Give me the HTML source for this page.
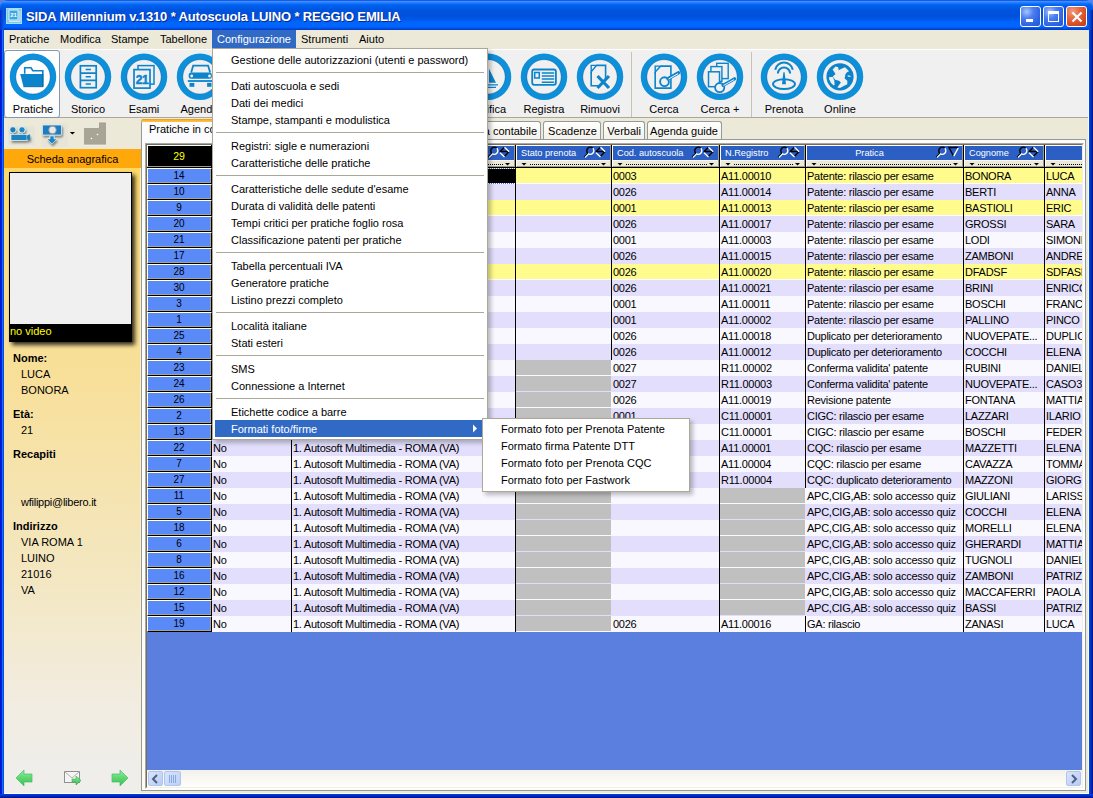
<!DOCTYPE html>
<html><head><meta charset="utf-8">
<style>
*{box-sizing:border-box;margin:0;padding:0}
html,body{width:1093px;height:798px;overflow:hidden;background:#ECE9D8;font-family:"Liberation Sans",sans-serif;font-size:11px;color:#000}
.a{position:absolute}
.t{position:absolute;white-space:pre;line-height:1}
</style></head><body>

<div class="a" style="left:0;top:0;width:1093px;height:10px;background:#5A82E2"></div>
<div class="a" style="left:0;top:0;width:1093px;height:30px;background:linear-gradient(#0A3CD8 0,#3C90FF 1.5px,#1A78FF 3px,#0062F2 5px,#0054DE 10px,#0050DA 15px,#0056E6 19px,#0064FC 22px,#0066FF 27px,#0044D4 29px,#003CC8 30px);border-radius:8px 8px 0 0"></div>
<div class="a" style="left:0;top:10px;width:4px;height:20px;background:linear-gradient(90deg,#0030C8,#0A50E0 3px,#0A5CE8)"></div>
<div class="a" style="left:1088px;top:10px;width:5px;height:20px;background:linear-gradient(90deg,#0A5CE8,#0040C8 3px,#001890)"></div>
<div class="a" style="left:0;top:30px;width:4px;height:768px;background:linear-gradient(90deg,#0018D0 0,#0020D8 1.5px,#1A6AF8 2.5px,#0050E8 3.5px)"></div>
<div class="a" style="left:1088px;top:30px;width:1px;height:764px;background:#FFFDF0"></div>
<div class="a" style="left:1089px;top:30px;width:4px;height:768px;background:linear-gradient(90deg,#0048F0,#0030C0 2px,#00108A)"></div>
<div class="a" style="left:4px;top:793px;width:1085px;height:1px;background:#FFFDF0"></div>
<div class="a" style="left:0;top:794px;width:1093px;height:4px;background:linear-gradient(#0040F0,#0030C8 1.5px,#00108A)"></div>
<svg class="a" style="left:6px;top:8px" width="16" height="16"><rect x="0" y="0" width="16" height="16" fill="#7CCBEA"/><rect x="0.5" y="0.5" width="15" height="15" fill="none" stroke="#A8DDF2"/><rect x="3" y="2" width="9" height="10" fill="#3AA8DC" stroke="#D8F0FA" stroke-width="1"/><text x="7.5" y="8.5" font-size="6" font-weight="bold" fill="#FFFFFF" text-anchor="middle" font-family="Liberation Sans">21</text><path d="M3 13.5 H14 V3" fill="none" stroke="#C8E8F6" stroke-width="1"/></svg>
<div class="t" style="left:26px;top:10px;font-size:13px;font-weight:bold;color:#fff;text-shadow:1px 1px 0 #0A2A8A;letter-spacing:-0.15px">SIDA Millennium v.1310 * Autoscuola LUINO * REGGIO EMILIA</div>
<div class="a" style="left:1020px;top:6px;width:21px;height:21px;border:1px solid #fff;border-radius:3px;background:radial-gradient(circle at 30% 25%,#A8C4FA 0,#4A7EF0 35%,#2F63E2 70%,#2455D0 100%)"><div class="a" style="left:5px;top:12px;width:7px;height:3px;background:#fff"></div></div>
<div class="a" style="left:1043px;top:6px;width:21px;height:21px;border:1px solid #fff;border-radius:3px;background:radial-gradient(circle at 30% 25%,#A8C4FA 0,#4A7EF0 35%,#2F63E2 70%,#2455D0 100%)"><div class="a" style="left:4px;top:4px;width:11px;height:11px;border:1px solid #fff;border-top-width:3px"></div></div>
<div class="a" style="left:1066px;top:6px;width:21px;height:21px;border:1px solid #fff;border-radius:3px;background:radial-gradient(circle at 30% 25%,#F0A080 0,#E56A45 35%,#D84A20 70%,#C23A12 100%)"><svg class="a" style="left:4px;top:4px" width="12" height="12"><path d="M1.5 1.5L10.5 10.5M10.5 1.5L1.5 10.5" stroke="#fff" stroke-width="2.2"/></svg></div>
<div class="a" style="left:4px;top:30px;width:1085px;height:19px;background:#ECE9D8"></div>
<div class="t" style="left:9px;top:34px">Pratiche</div>
<div class="t" style="left:60px;top:34px">Modifica</div>
<div class="t" style="left:111px;top:34px">Stampe</div>
<div class="t" style="left:160px;top:34px">Tabellone</div>
<div class="t" style="left:301px;top:34px">Strumenti</div>
<div class="t" style="left:359px;top:34px">Aiuto</div>
<div class="a" style="left:212px;top:30px;width:84px;height:19px;background:#316AC5"></div>
<div class="t" style="left:217px;top:34px;color:#fff">Configurazione</div>
<div class="a" style="left:4px;top:49px;width:1084px;height:69px;background:#F0F0F0;border-top:1px solid #FFFFFF;border-bottom:1px solid #ACA899"></div>
<div class="a" style="left:4px;top:50px;width:56px;height:68px;background:linear-gradient(#FFFFFF,#FCFCFC);border:1px solid #8098B0;border-radius:3px"></div>
<div class="a" style="left:631px;top:52px;width:1px;height:65px;background:#C8C4B4"></div>
<div class="a" style="left:751px;top:52px;width:1px;height:65px;background:#C8C4B4"></div>
<svg class="a" style="left:8px;top:52px;overflow:visible" width="50" height="50"><g transform="translate(25,24.8)"><circle cx="0" cy="0" r="20.2" fill="none" stroke="#0E8FDA" stroke-width="6.1"/><circle cx="0" cy="0" r="17.2" fill="none" stroke="#0A4F8A" stroke-width="0.6" opacity="0.6"/><path d="M-8.3 -3 V-9.1 H-2 L-0.1 -6.1 H9.8 V9.9" fill="none" stroke="#0C84CC" stroke-width="1.6"/><path d="M-12.8 -2.8 H9.8 V9.9 H-9.5 Z" fill="#0C84CC"/><path d="M-9.5 9.9 H9.8 V-2.8" fill="none" stroke="#0A5E9C" stroke-width="0.8"/></g></svg>
<div class="t" style="left:-7px;width:80px;text-align:center;top:104px">Pratiche</div>
<svg class="a" style="left:63px;top:52px;overflow:visible" width="50" height="50"><g transform="translate(25,24.8)"><circle cx="0" cy="0" r="20.2" fill="none" stroke="#0E8FDA" stroke-width="6.1"/><circle cx="0" cy="0" r="17.2" fill="none" stroke="#0A4F8A" stroke-width="0.6" opacity="0.6"/><rect x="-7.6" y="-11" width="15.8" height="21.9" fill="none" stroke="#0C84CC" stroke-width="1.7"/><path d="M-7.6 -3.7H8.2M-7.6 3.6H8.2" stroke="#0C84CC" stroke-width="1.7"/><path d="M-2.3 -7.3H2.9M-2.3 0H2.9M-2.3 7.3H2.9" stroke="#0C84CC" stroke-width="1.5"/></g></svg>
<div class="t" style="left:48px;width:80px;text-align:center;top:104px">Storico</div>
<svg class="a" style="left:119px;top:52px;overflow:visible" width="50" height="50"><g transform="translate(25,24.8)"><circle cx="0" cy="0" r="20.2" fill="none" stroke="#0E8FDA" stroke-width="6.1"/><circle cx="0" cy="0" r="17.2" fill="none" stroke="#0A4F8A" stroke-width="0.6" opacity="0.6"/><rect x="-6" y="-11.2" width="16" height="18.5" fill="#F0F0F0" stroke="#0C84CC" stroke-width="1.5"/><rect x="-10" y="-7.2" width="16" height="18.5" fill="#F0F0F0" stroke="#0C84CC" stroke-width="1.7"/><text x="-2" y="6.8" font-size="12" font-weight="700" fill="#0C84CC" stroke="#0C84CC" stroke-width="0.5" text-anchor="middle" font-family="Liberation Sans" letter-spacing="-0.5">21</text></g></svg>
<div class="t" style="left:104px;width:80px;text-align:center;top:104px">Esami</div>
<svg class="a" style="left:174.5px;top:52px;overflow:visible" width="50" height="50"><g transform="translate(25,24.8)"><circle cx="0" cy="0" r="20.2" fill="none" stroke="#0E8FDA" stroke-width="6.1"/><circle cx="0" cy="0" r="17.2" fill="none" stroke="#0A4F8A" stroke-width="0.6" opacity="0.6"/><path d="M-8.8 -4.3 L-6.8 -11.2 L8.1 -11.2 L10.1 -4.3" fill="none" stroke="#0C84CC" stroke-width="1.8"/><rect x="-11.3" y="-4.2" width="23.1" height="6.1" rx="2.5" fill="#0C84CC"/><circle cx="-8.3" cy="-0.8" r="1.4" fill="#F0F0F0"/><circle cx="9.5" cy="-0.8" r="1.4" fill="#F0F0F0"/><rect x="-12.2" y="3.3" width="24.4" height="1.8" fill="#0C84CC"/><rect x="-10.5" y="6.1" width="4.8" height="3.9" fill="#0C84CC"/><rect x="7.1" y="6.1" width="4.4" height="3.9" fill="#0C84CC"/></g></svg>
<div class="t" style="left:159.5px;width:80px;text-align:center;top:104px">Agenda</div>
<svg class="a" style="left:230px;top:52px;overflow:visible" width="50" height="50"><g transform="translate(25,24.8)"><circle cx="0" cy="0" r="20.2" fill="none" stroke="#0E8FDA" stroke-width="6.1"/><circle cx="0" cy="0" r="17.2" fill="none" stroke="#0A4F8A" stroke-width="0.6" opacity="0.6"/></g></svg>
<svg class="a" style="left:286px;top:52px;overflow:visible" width="50" height="50"><g transform="translate(25,24.8)"><circle cx="0" cy="0" r="20.2" fill="none" stroke="#0E8FDA" stroke-width="6.1"/><circle cx="0" cy="0" r="17.2" fill="none" stroke="#0A4F8A" stroke-width="0.6" opacity="0.6"/></g></svg>
<svg class="a" style="left:342px;top:52px;overflow:visible" width="50" height="50"><g transform="translate(25,24.8)"><circle cx="0" cy="0" r="20.2" fill="none" stroke="#0E8FDA" stroke-width="6.1"/><circle cx="0" cy="0" r="17.2" fill="none" stroke="#0A4F8A" stroke-width="0.6" opacity="0.6"/></g></svg>
<svg class="a" style="left:406px;top:52px;overflow:visible" width="50" height="50"><g transform="translate(25,24.8)"><circle cx="0" cy="0" r="20.2" fill="none" stroke="#0E8FDA" stroke-width="6.1"/><circle cx="0" cy="0" r="17.2" fill="none" stroke="#0A4F8A" stroke-width="0.6" opacity="0.6"/></g></svg>
<svg class="a" style="left:463px;top:52px;overflow:visible" width="50" height="50"><g transform="translate(25,24.8)"><circle cx="0" cy="0" r="20.2" fill="none" stroke="#0E8FDA" stroke-width="6.1"/><circle cx="0" cy="0" r="17.2" fill="none" stroke="#0A4F8A" stroke-width="0.6" opacity="0.6"/><path d="M-1 -10 L-10 6 L-1 6 Z" fill="#0C84CC"/><path d="M1 -8 L8 6 L1 6Z" fill="#0C84CC"/><path d="M-11 8 H10 M-9 10.5 H8" stroke="#0C84CC" stroke-width="1.2"/></g></svg>
<div class="t" style="left:448px;width:80px;text-align:center;top:104px">Verifica</div>
<svg class="a" style="left:519px;top:52px;overflow:visible" width="50" height="50"><g transform="translate(25,24.8)"><circle cx="0" cy="0" r="20.2" fill="none" stroke="#0E8FDA" stroke-width="6.1"/><circle cx="0" cy="0" r="17.2" fill="none" stroke="#0A4F8A" stroke-width="0.6" opacity="0.6"/><rect x="-11.8" y="-7.3" width="23.7" height="15.3" rx="2" fill="none" stroke="#0C84CC" stroke-width="1.8"/><rect x="-9.3" y="-4.3" width="4.6" height="5.5" fill="none" stroke="#0C84CC" stroke-width="1.5"/><path d="M-2.2 -3.9H10.2M-2.2 -0.9H10.2M-2.2 2.3H10.2M-2.2 5.5H10.2" stroke="#0C84CC" stroke-width="1.5"/></g></svg>
<div class="t" style="left:504px;width:80px;text-align:center;top:104px">Registra</div>
<svg class="a" style="left:575px;top:52px;overflow:visible" width="50" height="50"><g transform="translate(25,24.8)"><circle cx="0" cy="0" r="20.2" fill="none" stroke="#0E8FDA" stroke-width="6.1"/><circle cx="0" cy="0" r="17.2" fill="none" stroke="#0A4F8A" stroke-width="0.6" opacity="0.6"/><path d="M-3.5 -11.4 H5.6 V2 M-8.8 -5 V8.9 H-1" fill="none" stroke="#0C84CC" stroke-width="1.6"/><path d="M-8.8 -11.4 H-3.5 L-8.8 -5 Z" fill="none" stroke="#0C84CC" stroke-width="1.4"/><path d="M-2.5 -0.8 L9 11.2 M9 -0.8 L-2.5 11.2" stroke="#0C84CC" stroke-width="3.2"/></g></svg>
<div class="t" style="left:560px;width:80px;text-align:center;top:104px">Rimuovi</div>
<svg class="a" style="left:639px;top:52px;overflow:visible" width="50" height="50"><g transform="translate(25,24.8)"><circle cx="0" cy="0" r="20.2" fill="none" stroke="#0E8FDA" stroke-width="6.1"/><circle cx="0" cy="0" r="17.2" fill="none" stroke="#0A4F8A" stroke-width="0.6" opacity="0.6"/><path d="M-3.3 -10.7 H6.9 V11.3 H-8.8 V-4.8" fill="none" stroke="#0C84CC" stroke-width="1.6"/><path d="M-8.8 -10.7 H-3.3 L-8.8 -4.8 Z" fill="none" stroke="#0C84CC" stroke-width="1.4"/><circle cx="0.5" cy="4.9" r="4.4" fill="#F0F0F0" stroke="#0C84CC" stroke-width="1.9"/><path d="M4 2 L14.5 -4" stroke="#0C84CC" stroke-width="3.4" stroke-linecap="round"/><path d="M4.5 2.3 L14 -3.2" stroke="#FFF" stroke-width="1"/></g></svg>
<div class="t" style="left:624px;width:80px;text-align:center;top:104px">Cerca</div>
<svg class="a" style="left:695px;top:52px;overflow:visible" width="50" height="50"><g transform="translate(25,24.8)"><circle cx="0" cy="0" r="20.2" fill="none" stroke="#0E8FDA" stroke-width="6.1"/><circle cx="0" cy="0" r="17.2" fill="none" stroke="#0A4F8A" stroke-width="0.6" opacity="0.6"/><rect x="-3.3" y="-13.5" width="11.5" height="15.3" fill="#F0F0F0" stroke="#0C84CC" stroke-width="1.4"/><rect x="-9.1" y="-10.2" width="11" height="14.8" fill="#F0F0F0" stroke="#0C84CC" stroke-width="1.4"/><rect x="-11.5" y="-5" width="11" height="14.9" fill="#F0F0F0" stroke="#0C84CC" stroke-width="1.5"/><circle cx="-0.3" cy="10.8" r="4.6" fill="#F0F0F0" stroke="#0C84CC" stroke-width="1.8"/><path d="M3 8.5 L14.5 2" stroke="#0C84CC" stroke-width="3.2" stroke-linecap="round"/><path d="M3.5 8.7 L14 2.8" stroke="#FFF" stroke-width="0.9"/></g></svg>
<div class="t" style="left:680px;width:80px;text-align:center;top:104px">Cerca +</div>
<svg class="a" style="left:759px;top:52px;overflow:visible" width="50" height="50"><g transform="translate(25,24.8)"><circle cx="0" cy="0" r="20.2" fill="none" stroke="#0E8FDA" stroke-width="6.1"/><circle cx="0" cy="0" r="17.2" fill="none" stroke="#0A4F8A" stroke-width="0.6" opacity="0.6"/><ellipse cx="0" cy="7.3" rx="11" ry="4.9" fill="none" stroke="#0C84CC" stroke-width="1.9"/><path d="M-2 7.5 L-0.6 -4.5 L0.6 -4.5 L2 7.5 Z" fill="#0C84CC"/><path d="M-8.8 -7.1 A9 9 0 0 1 8.8 -7.1" fill="none" stroke="#0C84CC" stroke-width="2"/><path d="M-6.1 -3.3 A6.1 6.1 0 0 1 6.1 -3.3" fill="none" stroke="#0C84CC" stroke-width="2"/></g></svg>
<div class="t" style="left:744px;width:80px;text-align:center;top:104px">Prenota</div>
<svg class="a" style="left:815px;top:52px;overflow:visible" width="50" height="50"><g transform="translate(25,24.8)"><circle cx="0" cy="0" r="20.2" fill="none" stroke="#0E8FDA" stroke-width="6.1"/><circle cx="0" cy="0" r="17.2" fill="none" stroke="#0A4F8A" stroke-width="0.6" opacity="0.6"/><circle cx="0" cy="0" r="13.6" fill="#0C84CC"/><polygon points="-7.4,-7.4 -4.5,-10.4 -1.8,-9.5 -1.3,-6.5 1.4,-8.1 5.0,-9.5 7.3,-7.4 9.1,-5.6 7.3,-4.7 5.5,-2.9 4.6,1.6 7.3,3.9 7.3,7.5 3.7,9.3 0.0,11.1 -2.7,10.6 0.9,5.7 -0.9,3.9 -4.9,2.9 -7.2,-0.2 -4.5,-2.9" fill="#F0F0F0"/><polygon points="-10.8,0.2 -7.2,0.2 -5.8,3.4 -5.4,7.5 -6.3,8.8 -9.0,6.1 -10.8,2.5" fill="#F0F0F0"/><polygon points="7.7,-1.6 10.9,-0.7 10.0,0.2 7.7,-0.2" fill="#F0F0F0"/></g></svg>
<div class="t" style="left:800px;width:80px;text-align:center;top:104px">Online</div>
<div class="a" style="left:4px;top:118px;width:137px;height:31px;background:#ECE9D8"></div>
<div class="a" style="left:4px;top:149px;width:137px;height:19px;background:#FFA80C"></div>
<div class="t" style="left:4px;width:137px;text-align:center;top:154px">Scheda anagrafica</div>
<div class="a" style="left:4px;top:168px;width:137px;height:625px;background:linear-gradient(#FDD868 0,#FADC84 60px,#F8E09C 220px,#F3E8C6 430px,#F2ECE0 530px,#EFEEEA 600px,#EFEEEA 626px);border-right:1px solid #FCEEC8"></div>
<div class="a" style="left:12px;top:175px;width:123px;height:170px;background:#000;filter:blur(2px);opacity:.8"></div>
<div class="a" style="left:9px;top:172px;width:123px;height:170px;background:#000"></div>
<div class="a" style="left:10px;top:173px;width:121px;height:151px;background:#F0F0F0"></div>
<div class="t" style="left:10px;top:326px;color:#FFFF00">no video</div>
<div class="t" style="left:13px;top:353px;font-weight:bold;">Nome:</div>
<div class="t" style="left:21px;top:369px;font-weight:normal;">LUCA</div>
<div class="t" style="left:21px;top:385px;font-weight:normal;">BONORA</div>
<div class="t" style="left:13px;top:409px;font-weight:bold;">Età:</div>
<div class="t" style="left:21px;top:425px;font-weight:normal;">21</div>
<div class="t" style="left:13px;top:449px;font-weight:bold;">Recapiti</div>
<div class="t" style="left:21px;top:497px;font-weight:normal;letter-spacing:-0.25px;">wfilippi@libero.it</div>
<div class="t" style="left:13px;top:521px;font-weight:bold;">Indirizzo</div>
<div class="t" style="left:21px;top:537px;font-weight:normal;">VIA ROMA 1</div>
<div class="t" style="left:21px;top:553px;font-weight:normal;">LUINO</div>
<div class="t" style="left:21px;top:569px;font-weight:normal;">21016</div>
<div class="t" style="left:21px;top:585px;font-weight:normal;">VA</div>
<svg class="a" style="left:4px;top:119px" width="110" height="30"><defs><filter id="sh" x="-30%" y="-30%" width="160%" height="160%"><feGaussianBlur in="SourceAlpha" stdDeviation="1"/><feOffset dx="1" dy="1.5"/><feComponentTransfer><feFuncA type="linear" slope="0.45"/></feComponentTransfer><feMerge><feMergeNode/><feMergeNode in="SourceGraphic"/></feMerge></filter></defs><rect x="4" y="7" width="27" height="19" fill="#E4E2D8" opacity="0.8"/><g filter="url(#sh)"><circle cx="8.9" cy="10.8" r="3.1" fill="#1E7FB8" stroke="#fff" stroke-width="0.7"/><circle cx="18" cy="10.8" r="3.1" fill="#168BC8" stroke="#fff" stroke-width="0.7"/><rect x="7" y="15.3" width="16" height="6" fill="#1A84C0" stroke="#fff" stroke-width="0.6"/><path d="M23 16.5 L26 15.2 L26 21.5 L23 20.3Z" fill="#1A84C0"/></g><rect x="38" y="4" width="26" height="24" fill="#E4E2D8" opacity="0.7"/><g filter="url(#sh)"><rect x="38.5" y="6" width="19" height="10" rx="1" fill="#1A7EC0" stroke="#D8ECF8" stroke-width="0.8"/><circle cx="48.5" cy="11" r="3.8" fill="#E8E8E8" stroke="#909090" stroke-width="0.8"/><path d="M46 17 L50 17 L50 20 L53 20 L48 25 L43 20 L46 20Z" fill="#1A84C8" stroke="#fff" stroke-width="0.5"/></g><path d="M65.8 13 L71 13 L68.4 15.6Z" fill="#000"/><path d="M79.5 8.5 L94.5 8.5 L94.5 3 L102.5 3 L102.5 25 Q102.5 26 101.5 26 L80.5 26 Q79.5 26 79.5 25Z" fill="#A9A596" stroke="#FFFFFF" stroke-width="0.6"/><circle cx="87.5" cy="19.5" r="0.8" fill="#fff"/><circle cx="93.5" cy="15.5" r="0.8" fill="#fff"/></svg>
<svg class="a" style="left:14px;top:769px" width="120" height="20"><defs><linearGradient id="gg" x1="0" y1="0" x2="0" y2="1"><stop offset="0" stop-color="#9BE8A8"/><stop offset="0.5" stop-color="#5CD672"/><stop offset="1" stop-color="#3CC058"/></linearGradient></defs><path d="M2 9 L10 1 L10 5 L18 5 L18 13 L10 13 L10 17Z" fill="url(#gg)" stroke="#48C060" stroke-width="0.7"/><rect x="50.5" y="2.5" width="15" height="11" fill="#F4F4F4" stroke="#909090"/><path d="M50.5 2.5 L58 9 L65.5 2.5" fill="none" stroke="#B0B0B0"/><path d="M58 10 L62 10 L62 7 L67 11.5 L62 16 L62 13 L58 13Z" fill="url(#gg)" stroke="#40A850" stroke-width="0.6"/><path d="M114 9 L106 1 L106 5 L98 5 L98 13 L106 13 L106 17Z" fill="url(#gg)" stroke="#48C060" stroke-width="0.7"/></svg>
<div class="a" style="left:141px;top:139px;width:945px;height:652px;background:#FCFCFE;border:1px solid #919B9C;border-top:none"></div>
<div class="a" style="left:141px;top:119px;width:100px;height:21px;background:#FCFCFE;border:1px solid #919B9C;border-bottom:none;border-radius:3px 3px 0 0"><div class="a" style="left:-1px;top:-1px;right:-1px;height:3px;background:linear-gradient(#E68B2C,#F8B030 1px,#FFC73C);border-radius:3px 3px 0 0"></div></div>
<div class="t" style="left:149px;top:124px">Pratiche in corso</div>
<div class="a" style="left:420px;top:121px;width:121px;height:18px;background:linear-gradient(#FFFFFF,#F3F1E8);border:1px solid #919B9C;border-bottom:none;border-radius:3px 3px 0 0"></div>
<div class="t" style="left:420px;width:117px;text-align:right;top:126px">Prima nota contabile</div>
<div class="a" style="left:543px;top:121px;width:58px;height:18px;background:linear-gradient(#FFFFFF,#F3F1E8);border:1px solid #919B9C;border-bottom:none;border-radius:3px 3px 0 0"></div>
<div class="t" style="left:543px;width:54px;text-align:right;top:126px">Scadenze</div>
<div class="a" style="left:603px;top:121px;width:42px;height:18px;background:linear-gradient(#FFFFFF,#F3F1E8);border:1px solid #919B9C;border-bottom:none;border-radius:3px 3px 0 0"></div>
<div class="t" style="left:603px;width:38px;text-align:right;top:126px">Verbali</div>
<div class="a" style="left:647px;top:121px;width:75px;height:18px;background:linear-gradient(#FFFFFF,#F3F1E8);border:1px solid #919B9C;border-bottom:none;border-radius:3px 3px 0 0"></div>
<div class="t" style="left:647px;width:71px;text-align:right;top:126px">Agenda guide</div>
<div class="a" style="left:212px;top:139px;width:874px;height:1px;background:#919B9C"></div>
<div class="a" style="left:145px;top:143px;width:939px;height:646px;background:#5B7FDE;border-style:solid;border-width:2px;border-color:#ACA899 #FFFFFF #FFFFFF #ACA899"></div>
<div class="a" style="left:146px;top:144px;width:937px;height:644px;border-style:solid;border-width:1px;border-color:#716F64 #F1EFE2 #F1EFE2 #716F64"></div>
<div class="a" style="left:147px;top:145px;width:935px;height:23px;background:#000"></div>
<div class="a" style="left:147px;top:145px;width:64px;height:22px;background:#000;border-top:1px solid #FFF;border-left:1px solid #FFF;border-bottom:1px solid #A09C8C"></div>
<div class="t" style="left:147px;width:64px;text-align:center;top:151px;font-size:10.5px;color:#FFFF00">29</div>
<div class="a" style="left:212px;top:145px;width:79px;height:22px;background:#ECE9D8;border-top:1px solid #FFF;border-left:1px solid #FFF;border-right:1px solid #A09C8C;border-bottom:1px solid #A09C8C"></div>
<div class="a" style="left:213px;top:146px;width:77px;height:14px;background:#2C5FC3"></div>
<div class="a" style="left:213px;top:160px;width:77px;height:1px;background:#F8F6EC"></div>
<svg class="a" style="left:212px;top:161px" width="79" height="6"><path d="M5.5 2 L10.5 2 L8 4.6Z" fill="#000"/><path d="M69 2 L74 2 L71.5 4.6Z" fill="#000"/><path d="M14 3.5 L67 3.5" stroke="#000" stroke-width="1" stroke-dasharray="1 1"/></svg>
<svg class="a" style="left:260px;top:146px" width="28" height="13"><path d="M7.8 7.3 A3.5 3.5 0 0 1 12.8 2.3" fill="none" stroke="#000" stroke-width="1.4"/><path d="M12.8 2.3 A3.5 3.5 0 0 1 7.8 7.3" fill="none" stroke="#fff" stroke-width="1.4"/><path d="M8 7.2 L4.2 11" stroke="#000" stroke-width="1.3"/><path d="M8.5 8 L5 11.5" stroke="#fff" stroke-width="1.1"/><path d="M15.8 5.8 L20.5 1.2 M15.8 5.5 H25 M20.5 10.2 L25.2 5.5" fill="none" stroke="#000" stroke-width="1.3"/><path d="M20.5 1.2 L25.2 5.8 M16 6.8 L20.5 11" fill="none" stroke="#fff" stroke-width="1.3"/></svg>
<div class="a" style="left:292px;top:145px;width:223px;height:22px;background:#ECE9D8;border-top:1px solid #FFF;border-left:1px solid #FFF;border-right:1px solid #A09C8C;border-bottom:1px solid #A09C8C"></div>
<div class="a" style="left:293px;top:146px;width:221px;height:14px;background:#2C5FC3"></div>
<div class="a" style="left:293px;top:160px;width:221px;height:1px;background:#F8F6EC"></div>
<svg class="a" style="left:292px;top:161px" width="223" height="6"><path d="M5.5 2 L10.5 2 L8 4.6Z" fill="#000"/><path d="M213 2 L218 2 L215.5 4.6Z" fill="#000"/><path d="M14 3.5 L211 3.5" stroke="#000" stroke-width="1" stroke-dasharray="1 1"/></svg>
<svg class="a" style="left:484px;top:146px" width="28" height="13"><path d="M7.8 7.3 A3.5 3.5 0 0 1 12.8 2.3" fill="none" stroke="#000" stroke-width="1.4"/><path d="M12.8 2.3 A3.5 3.5 0 0 1 7.8 7.3" fill="none" stroke="#fff" stroke-width="1.4"/><path d="M8 7.2 L4.2 11" stroke="#000" stroke-width="1.3"/><path d="M8.5 8 L5 11.5" stroke="#fff" stroke-width="1.1"/><path d="M15.8 5.8 L20.5 1.2 M15.8 5.5 H25 M20.5 10.2 L25.2 5.5" fill="none" stroke="#000" stroke-width="1.3"/><path d="M20.5 1.2 L25.2 5.8 M16 6.8 L20.5 11" fill="none" stroke="#fff" stroke-width="1.3"/></svg>
<div class="a" style="left:516px;top:145px;width:95px;height:22px;background:#ECE9D8;border-top:1px solid #FFF;border-left:1px solid #FFF;border-right:1px solid #A09C8C;border-bottom:1px solid #A09C8C"></div>
<div class="a" style="left:517px;top:146px;width:93px;height:14px;background:#2C5FC3"></div>
<div class="a" style="left:517px;top:160px;width:93px;height:1px;background:#F8F6EC"></div>
<svg class="a" style="left:516px;top:161px" width="95" height="6"><path d="M5.5 2 L10.5 2 L8 4.6Z" fill="#000"/><path d="M85 2 L90 2 L87.5 4.6Z" fill="#000"/><path d="M14 3.5 L83 3.5" stroke="#000" stroke-width="1" stroke-dasharray="1 1"/></svg>
<div class="t" style="left:521px;top:149px;font-size:9.2px;color:#fff">Stato prenota</div>
<svg class="a" style="left:580px;top:146px" width="28" height="13"><path d="M7.8 7.3 A3.5 3.5 0 0 1 12.8 2.3" fill="none" stroke="#000" stroke-width="1.4"/><path d="M12.8 2.3 A3.5 3.5 0 0 1 7.8 7.3" fill="none" stroke="#fff" stroke-width="1.4"/><path d="M8 7.2 L4.2 11" stroke="#000" stroke-width="1.3"/><path d="M8.5 8 L5 11.5" stroke="#fff" stroke-width="1.1"/><path d="M15.8 5.8 L20.5 1.2 M15.8 5.5 H25 M20.5 10.2 L25.2 5.5" fill="none" stroke="#000" stroke-width="1.3"/><path d="M20.5 1.2 L25.2 5.8 M16 6.8 L20.5 11" fill="none" stroke="#fff" stroke-width="1.3"/></svg>
<div class="a" style="left:612px;top:145px;width:107px;height:22px;background:#ECE9D8;border-top:1px solid #FFF;border-left:1px solid #FFF;border-right:1px solid #A09C8C;border-bottom:1px solid #A09C8C"></div>
<div class="a" style="left:613px;top:146px;width:105px;height:14px;background:#2C5FC3"></div>
<div class="a" style="left:613px;top:160px;width:105px;height:1px;background:#F8F6EC"></div>
<svg class="a" style="left:612px;top:161px" width="107" height="6"><path d="M5.5 2 L10.5 2 L8 4.6Z" fill="#000"/><path d="M97 2 L102 2 L99.5 4.6Z" fill="#000"/><path d="M14 3.5 L95 3.5" stroke="#000" stroke-width="1" stroke-dasharray="1 1"/></svg>
<div class="t" style="left:617px;top:149px;font-size:9.2px;color:#fff">Cod. autoscuola</div>
<svg class="a" style="left:688px;top:146px" width="28" height="13"><path d="M7.8 7.3 A3.5 3.5 0 0 1 12.8 2.3" fill="none" stroke="#000" stroke-width="1.4"/><path d="M12.8 2.3 A3.5 3.5 0 0 1 7.8 7.3" fill="none" stroke="#fff" stroke-width="1.4"/><path d="M8 7.2 L4.2 11" stroke="#000" stroke-width="1.3"/><path d="M8.5 8 L5 11.5" stroke="#fff" stroke-width="1.1"/><path d="M15.8 5.8 L20.5 1.2 M15.8 5.5 H25 M20.5 10.2 L25.2 5.5" fill="none" stroke="#000" stroke-width="1.3"/><path d="M20.5 1.2 L25.2 5.8 M16 6.8 L20.5 11" fill="none" stroke="#fff" stroke-width="1.3"/></svg>
<div class="a" style="left:720px;top:145px;width:85px;height:22px;background:#ECE9D8;border-top:1px solid #FFF;border-left:1px solid #FFF;border-right:1px solid #A09C8C;border-bottom:1px solid #A09C8C"></div>
<div class="a" style="left:721px;top:146px;width:83px;height:14px;background:#2C5FC3"></div>
<div class="a" style="left:721px;top:160px;width:83px;height:1px;background:#F8F6EC"></div>
<svg class="a" style="left:720px;top:161px" width="85" height="6"><path d="M5.5 2 L10.5 2 L8 4.6Z" fill="#000"/><path d="M75 2 L80 2 L77.5 4.6Z" fill="#000"/><path d="M14 3.5 L73 3.5" stroke="#000" stroke-width="1" stroke-dasharray="1 1"/></svg>
<div class="t" style="left:725px;top:149px;font-size:9.2px;color:#fff">N.Registro</div>
<svg class="a" style="left:774px;top:146px" width="28" height="13"><path d="M7.8 7.3 A3.5 3.5 0 0 1 12.8 2.3" fill="none" stroke="#000" stroke-width="1.4"/><path d="M12.8 2.3 A3.5 3.5 0 0 1 7.8 7.3" fill="none" stroke="#fff" stroke-width="1.4"/><path d="M8 7.2 L4.2 11" stroke="#000" stroke-width="1.3"/><path d="M8.5 8 L5 11.5" stroke="#fff" stroke-width="1.1"/><path d="M15.8 5.8 L20.5 1.2 M15.8 5.5 H25 M20.5 10.2 L25.2 5.5" fill="none" stroke="#000" stroke-width="1.3"/><path d="M20.5 1.2 L25.2 5.8 M16 6.8 L20.5 11" fill="none" stroke="#fff" stroke-width="1.3"/></svg>
<div class="a" style="left:806px;top:145px;width:157px;height:22px;background:#ECE9D8;border-top:1px solid #FFF;border-left:1px solid #FFF;border-right:1px solid #A09C8C;border-bottom:1px solid #A09C8C"></div>
<div class="a" style="left:807px;top:146px;width:155px;height:14px;background:#2C5FC3"></div>
<div class="a" style="left:807px;top:160px;width:155px;height:1px;background:#F8F6EC"></div>
<svg class="a" style="left:806px;top:161px" width="157" height="6"><path d="M5.5 2 L10.5 2 L8 4.6Z" fill="#000"/><path d="M147 2 L152 2 L149.5 4.6Z" fill="#000"/><path d="M14 3.5 L145 3.5" stroke="#000" stroke-width="1" stroke-dasharray="1 1"/></svg>
<div class="t" style="left:806px;width:127px;text-align:center;top:149px;font-size:9.2px;color:#fff">Pratica</div>
<svg class="a" style="left:932px;top:146px" width="28" height="13"><path d="M7.8 7.3 A3.5 3.5 0 0 1 12.8 2.3" fill="none" stroke="#000" stroke-width="1.4"/><path d="M12.8 2.3 A3.5 3.5 0 0 1 7.8 7.3" fill="none" stroke="#fff" stroke-width="1.4"/><path d="M8 7.2 L4.2 11" stroke="#000" stroke-width="1.3"/><path d="M8.5 8 L5 11.5" stroke="#fff" stroke-width="1.1"/><path d="M26 1.5 L17 1.5 L21.5 10" fill="none" stroke="#000" stroke-width="1.4"/><path d="M26.2 2 L21.8 10.2" fill="none" stroke="#fff" stroke-width="1.4"/></svg>
<div class="a" style="left:964px;top:145px;width:80px;height:22px;background:#ECE9D8;border-top:1px solid #FFF;border-left:1px solid #FFF;border-right:1px solid #A09C8C;border-bottom:1px solid #A09C8C"></div>
<div class="a" style="left:965px;top:146px;width:78px;height:14px;background:#2C5FC3"></div>
<div class="a" style="left:965px;top:160px;width:78px;height:1px;background:#F8F6EC"></div>
<svg class="a" style="left:964px;top:161px" width="80" height="6"><path d="M5.5 2 L10.5 2 L8 4.6Z" fill="#000"/><path d="M70 2 L75 2 L72.5 4.6Z" fill="#000"/><path d="M14 3.5 L68 3.5" stroke="#000" stroke-width="1" stroke-dasharray="1 1"/></svg>
<div class="t" style="left:969px;top:149px;font-size:9.2px;color:#fff">Cognome</div>
<svg class="a" style="left:1013px;top:146px" width="28" height="13"><path d="M7.8 7.3 A3.5 3.5 0 0 1 12.8 2.3" fill="none" stroke="#000" stroke-width="1.4"/><path d="M12.8 2.3 A3.5 3.5 0 0 1 7.8 7.3" fill="none" stroke="#fff" stroke-width="1.4"/><path d="M8 7.2 L4.2 11" stroke="#000" stroke-width="1.3"/><path d="M8.5 8 L5 11.5" stroke="#fff" stroke-width="1.1"/><path d="M15.8 5.8 L20.5 1.2 M15.8 5.5 H25 M20.5 10.2 L25.2 5.5" fill="none" stroke="#000" stroke-width="1.3"/><path d="M20.5 1.2 L25.2 5.8 M16 6.8 L20.5 11" fill="none" stroke="#fff" stroke-width="1.3"/></svg>
<div class="a" style="left:1045px;top:145px;width:37px;height:22px;background:#ECE9D8;border-top:1px solid #FFF;border-left:1px solid #FFF;border-right:none;border-bottom:1px solid #A09C8C"></div>
<div class="a" style="left:1046px;top:146px;width:36px;height:14px;background:#2C5FC3"></div>
<div class="a" style="left:1046px;top:160px;width:36px;height:1px;background:#F8F6EC"></div>
<svg class="a" style="left:1045px;top:161px" width="37" height="6"><path d="M5.5 2 L10.5 2 L8 4.6Z" fill="#000"/><path d="M14 3.5 L37 3.5" stroke="#000" stroke-width="1" stroke-dasharray="1 1"/></svg>
<div class="a" style="left:211px;top:168px;width:871px;height:16px;background:#F9F8FF"></div>
<div class="a" style="left:211px;top:168px;width:871px;height:15px;background:#FFFB8C"></div>
<div class="a" style="left:211px;top:183px;width:871px;height:1px;background:#FFFFFF"></div>
<div class="a" style="left:147px;top:168px;width:65px;height:16px;background:#5A8AF8;border-top:1px solid #FFF;border-left:1px solid #FFF;border-bottom:1px solid #000;border-right:1px solid #000;box-shadow:inset -1px -1px 0 #A8A494"></div>
<div class="t" style="left:147px;width:64px;text-align:center;top:171px;font-size:10px">14</div>
<div class="a" style="left:612px;top:168px;width:107px;height:16px;overflow:hidden"><div class="t" style="left:1px;top:3px;letter-spacing:-0.25px">0003</div></div>
<div class="a" style="left:720px;top:168px;width:85px;height:16px;overflow:hidden"><div class="t" style="left:1px;top:3px;letter-spacing:-0.25px">A11.00010</div></div>
<div class="a" style="left:806px;top:168px;width:157px;height:16px;overflow:hidden"><div class="t" style="left:1px;top:3px;letter-spacing:-0.25px">Patente: rilascio per esame</div></div>
<div class="a" style="left:964px;top:168px;width:80px;height:16px;overflow:hidden"><div class="t" style="left:1px;top:3px;letter-spacing:-0.25px">BONORA</div></div>
<div class="a" style="left:1045px;top:168px;width:37px;height:16px;overflow:hidden"><div class="t" style="left:1px;top:3px;letter-spacing:-0.25px">LUCA</div></div>
<div class="a" style="left:292px;top:169px;width:223px;height:14px;background:#000;outline:1px dotted #4070F0;outline-offset:0px"></div>
<div class="a" style="left:211px;top:184px;width:871px;height:16px;background:#E2DEFC"></div>
<div class="a" style="left:147px;top:184px;width:65px;height:16px;background:#5A8AF8;border-top:1px solid #FFF;border-left:1px solid #FFF;border-bottom:1px solid #000;border-right:1px solid #000;box-shadow:inset -1px -1px 0 #A8A494"></div>
<div class="t" style="left:147px;width:64px;text-align:center;top:187px;font-size:10px">10</div>
<div class="a" style="left:612px;top:184px;width:107px;height:16px;overflow:hidden"><div class="t" style="left:1px;top:3px;letter-spacing:-0.25px">0026</div></div>
<div class="a" style="left:720px;top:184px;width:85px;height:16px;overflow:hidden"><div class="t" style="left:1px;top:3px;letter-spacing:-0.25px">A11.00014</div></div>
<div class="a" style="left:806px;top:184px;width:157px;height:16px;overflow:hidden"><div class="t" style="left:1px;top:3px;letter-spacing:-0.25px">Patente: rilascio per esame</div></div>
<div class="a" style="left:964px;top:184px;width:80px;height:16px;overflow:hidden"><div class="t" style="left:1px;top:3px;letter-spacing:-0.25px">BERTI</div></div>
<div class="a" style="left:1045px;top:184px;width:37px;height:16px;overflow:hidden"><div class="t" style="left:1px;top:3px;letter-spacing:-0.25px">ANNA</div></div>
<div class="a" style="left:211px;top:200px;width:871px;height:16px;background:#F9F8FF"></div>
<div class="a" style="left:211px;top:200px;width:871px;height:15px;background:#FFFB8C"></div>
<div class="a" style="left:211px;top:215px;width:871px;height:1px;background:#FFFFFF"></div>
<div class="a" style="left:147px;top:200px;width:65px;height:16px;background:#5A8AF8;border-top:1px solid #FFF;border-left:1px solid #FFF;border-bottom:1px solid #000;border-right:1px solid #000;box-shadow:inset -1px -1px 0 #A8A494"></div>
<div class="t" style="left:147px;width:64px;text-align:center;top:203px;font-size:10px">9</div>
<div class="a" style="left:612px;top:200px;width:107px;height:16px;overflow:hidden"><div class="t" style="left:1px;top:3px;letter-spacing:-0.25px">0001</div></div>
<div class="a" style="left:720px;top:200px;width:85px;height:16px;overflow:hidden"><div class="t" style="left:1px;top:3px;letter-spacing:-0.25px">A11.00013</div></div>
<div class="a" style="left:806px;top:200px;width:157px;height:16px;overflow:hidden"><div class="t" style="left:1px;top:3px;letter-spacing:-0.25px">Patente: rilascio per esame</div></div>
<div class="a" style="left:964px;top:200px;width:80px;height:16px;overflow:hidden"><div class="t" style="left:1px;top:3px;letter-spacing:-0.25px">BASTIOLI</div></div>
<div class="a" style="left:1045px;top:200px;width:37px;height:16px;overflow:hidden"><div class="t" style="left:1px;top:3px;letter-spacing:-0.25px">ERIC</div></div>
<div class="a" style="left:211px;top:216px;width:871px;height:16px;background:#E2DEFC"></div>
<div class="a" style="left:147px;top:216px;width:65px;height:16px;background:#5A8AF8;border-top:1px solid #FFF;border-left:1px solid #FFF;border-bottom:1px solid #000;border-right:1px solid #000;box-shadow:inset -1px -1px 0 #A8A494"></div>
<div class="t" style="left:147px;width:64px;text-align:center;top:219px;font-size:10px">20</div>
<div class="a" style="left:612px;top:216px;width:107px;height:16px;overflow:hidden"><div class="t" style="left:1px;top:3px;letter-spacing:-0.25px">0026</div></div>
<div class="a" style="left:720px;top:216px;width:85px;height:16px;overflow:hidden"><div class="t" style="left:1px;top:3px;letter-spacing:-0.25px">A11.00017</div></div>
<div class="a" style="left:806px;top:216px;width:157px;height:16px;overflow:hidden"><div class="t" style="left:1px;top:3px;letter-spacing:-0.25px">Patente: rilascio per esame</div></div>
<div class="a" style="left:964px;top:216px;width:80px;height:16px;overflow:hidden"><div class="t" style="left:1px;top:3px;letter-spacing:-0.25px">GROSSI</div></div>
<div class="a" style="left:1045px;top:216px;width:37px;height:16px;overflow:hidden"><div class="t" style="left:1px;top:3px;letter-spacing:-0.25px">SARA</div></div>
<div class="a" style="left:211px;top:232px;width:871px;height:16px;background:#F9F8FF"></div>
<div class="a" style="left:147px;top:232px;width:65px;height:16px;background:#5A8AF8;border-top:1px solid #FFF;border-left:1px solid #FFF;border-bottom:1px solid #000;border-right:1px solid #000;box-shadow:inset -1px -1px 0 #A8A494"></div>
<div class="t" style="left:147px;width:64px;text-align:center;top:235px;font-size:10px">21</div>
<div class="a" style="left:612px;top:232px;width:107px;height:16px;overflow:hidden"><div class="t" style="left:1px;top:3px;letter-spacing:-0.25px">0001</div></div>
<div class="a" style="left:720px;top:232px;width:85px;height:16px;overflow:hidden"><div class="t" style="left:1px;top:3px;letter-spacing:-0.25px">A11.00003</div></div>
<div class="a" style="left:806px;top:232px;width:157px;height:16px;overflow:hidden"><div class="t" style="left:1px;top:3px;letter-spacing:-0.25px">Patente: rilascio per esame</div></div>
<div class="a" style="left:964px;top:232px;width:80px;height:16px;overflow:hidden"><div class="t" style="left:1px;top:3px;letter-spacing:-0.25px">LODI</div></div>
<div class="a" style="left:1045px;top:232px;width:37px;height:16px;overflow:hidden"><div class="t" style="left:1px;top:3px;letter-spacing:-0.25px">SIMONE</div></div>
<div class="a" style="left:211px;top:248px;width:871px;height:16px;background:#E2DEFC"></div>
<div class="a" style="left:147px;top:248px;width:65px;height:16px;background:#5A8AF8;border-top:1px solid #FFF;border-left:1px solid #FFF;border-bottom:1px solid #000;border-right:1px solid #000;box-shadow:inset -1px -1px 0 #A8A494"></div>
<div class="t" style="left:147px;width:64px;text-align:center;top:251px;font-size:10px">17</div>
<div class="a" style="left:612px;top:248px;width:107px;height:16px;overflow:hidden"><div class="t" style="left:1px;top:3px;letter-spacing:-0.25px">0026</div></div>
<div class="a" style="left:720px;top:248px;width:85px;height:16px;overflow:hidden"><div class="t" style="left:1px;top:3px;letter-spacing:-0.25px">A11.00015</div></div>
<div class="a" style="left:806px;top:248px;width:157px;height:16px;overflow:hidden"><div class="t" style="left:1px;top:3px;letter-spacing:-0.25px">Patente: rilascio per esame</div></div>
<div class="a" style="left:964px;top:248px;width:80px;height:16px;overflow:hidden"><div class="t" style="left:1px;top:3px;letter-spacing:-0.25px">ZAMBONI</div></div>
<div class="a" style="left:1045px;top:248px;width:37px;height:16px;overflow:hidden"><div class="t" style="left:1px;top:3px;letter-spacing:-0.25px">ANDREA</div></div>
<div class="a" style="left:211px;top:264px;width:871px;height:16px;background:#F9F8FF"></div>
<div class="a" style="left:211px;top:264px;width:871px;height:15px;background:#FFFB8C"></div>
<div class="a" style="left:211px;top:279px;width:871px;height:1px;background:#FFFFFF"></div>
<div class="a" style="left:147px;top:264px;width:65px;height:16px;background:#5A8AF8;border-top:1px solid #FFF;border-left:1px solid #FFF;border-bottom:1px solid #000;border-right:1px solid #000;box-shadow:inset -1px -1px 0 #A8A494"></div>
<div class="t" style="left:147px;width:64px;text-align:center;top:267px;font-size:10px">28</div>
<div class="a" style="left:612px;top:264px;width:107px;height:16px;overflow:hidden"><div class="t" style="left:1px;top:3px;letter-spacing:-0.25px">0026</div></div>
<div class="a" style="left:720px;top:264px;width:85px;height:16px;overflow:hidden"><div class="t" style="left:1px;top:3px;letter-spacing:-0.25px">A11.00020</div></div>
<div class="a" style="left:806px;top:264px;width:157px;height:16px;overflow:hidden"><div class="t" style="left:1px;top:3px;letter-spacing:-0.25px">Patente: rilascio per esame</div></div>
<div class="a" style="left:964px;top:264px;width:80px;height:16px;overflow:hidden"><div class="t" style="left:1px;top:3px;letter-spacing:-0.25px">DFADSF</div></div>
<div class="a" style="left:1045px;top:264px;width:37px;height:16px;overflow:hidden"><div class="t" style="left:1px;top:3px;letter-spacing:-0.25px">SDFASDF</div></div>
<div class="a" style="left:211px;top:280px;width:871px;height:16px;background:#E2DEFC"></div>
<div class="a" style="left:147px;top:280px;width:65px;height:16px;background:#5A8AF8;border-top:1px solid #FFF;border-left:1px solid #FFF;border-bottom:1px solid #000;border-right:1px solid #000;box-shadow:inset -1px -1px 0 #A8A494"></div>
<div class="t" style="left:147px;width:64px;text-align:center;top:283px;font-size:10px">30</div>
<div class="a" style="left:612px;top:280px;width:107px;height:16px;overflow:hidden"><div class="t" style="left:1px;top:3px;letter-spacing:-0.25px">0026</div></div>
<div class="a" style="left:720px;top:280px;width:85px;height:16px;overflow:hidden"><div class="t" style="left:1px;top:3px;letter-spacing:-0.25px">A11.00021</div></div>
<div class="a" style="left:806px;top:280px;width:157px;height:16px;overflow:hidden"><div class="t" style="left:1px;top:3px;letter-spacing:-0.25px">Patente: rilascio per esame</div></div>
<div class="a" style="left:964px;top:280px;width:80px;height:16px;overflow:hidden"><div class="t" style="left:1px;top:3px;letter-spacing:-0.25px">BRINI</div></div>
<div class="a" style="left:1045px;top:280px;width:37px;height:16px;overflow:hidden"><div class="t" style="left:1px;top:3px;letter-spacing:-0.25px">ENRICO</div></div>
<div class="a" style="left:211px;top:296px;width:871px;height:16px;background:#F9F8FF"></div>
<div class="a" style="left:147px;top:296px;width:65px;height:16px;background:#5A8AF8;border-top:1px solid #FFF;border-left:1px solid #FFF;border-bottom:1px solid #000;border-right:1px solid #000;box-shadow:inset -1px -1px 0 #A8A494"></div>
<div class="t" style="left:147px;width:64px;text-align:center;top:299px;font-size:10px">3</div>
<div class="a" style="left:612px;top:296px;width:107px;height:16px;overflow:hidden"><div class="t" style="left:1px;top:3px;letter-spacing:-0.25px">0001</div></div>
<div class="a" style="left:720px;top:296px;width:85px;height:16px;overflow:hidden"><div class="t" style="left:1px;top:3px;letter-spacing:-0.25px">A11.00011</div></div>
<div class="a" style="left:806px;top:296px;width:157px;height:16px;overflow:hidden"><div class="t" style="left:1px;top:3px;letter-spacing:-0.25px">Patente: rilascio per esame</div></div>
<div class="a" style="left:964px;top:296px;width:80px;height:16px;overflow:hidden"><div class="t" style="left:1px;top:3px;letter-spacing:-0.25px">BOSCHI</div></div>
<div class="a" style="left:1045px;top:296px;width:37px;height:16px;overflow:hidden"><div class="t" style="left:1px;top:3px;letter-spacing:-0.25px">FRANCO</div></div>
<div class="a" style="left:211px;top:312px;width:871px;height:16px;background:#E2DEFC"></div>
<div class="a" style="left:147px;top:312px;width:65px;height:16px;background:#5A8AF8;border-top:1px solid #FFF;border-left:1px solid #FFF;border-bottom:1px solid #000;border-right:1px solid #000;box-shadow:inset -1px -1px 0 #A8A494"></div>
<div class="t" style="left:147px;width:64px;text-align:center;top:315px;font-size:10px">1</div>
<div class="a" style="left:612px;top:312px;width:107px;height:16px;overflow:hidden"><div class="t" style="left:1px;top:3px;letter-spacing:-0.25px">0001</div></div>
<div class="a" style="left:720px;top:312px;width:85px;height:16px;overflow:hidden"><div class="t" style="left:1px;top:3px;letter-spacing:-0.25px">A11.00002</div></div>
<div class="a" style="left:806px;top:312px;width:157px;height:16px;overflow:hidden"><div class="t" style="left:1px;top:3px;letter-spacing:-0.25px">Patente: rilascio per esame</div></div>
<div class="a" style="left:964px;top:312px;width:80px;height:16px;overflow:hidden"><div class="t" style="left:1px;top:3px;letter-spacing:-0.25px">PALLINO</div></div>
<div class="a" style="left:1045px;top:312px;width:37px;height:16px;overflow:hidden"><div class="t" style="left:1px;top:3px;letter-spacing:-0.25px">PINCO</div></div>
<div class="a" style="left:211px;top:328px;width:871px;height:16px;background:#F9F8FF"></div>
<div class="a" style="left:147px;top:328px;width:65px;height:16px;background:#5A8AF8;border-top:1px solid #FFF;border-left:1px solid #FFF;border-bottom:1px solid #000;border-right:1px solid #000;box-shadow:inset -1px -1px 0 #A8A494"></div>
<div class="t" style="left:147px;width:64px;text-align:center;top:331px;font-size:10px">25</div>
<div class="a" style="left:612px;top:328px;width:107px;height:16px;overflow:hidden"><div class="t" style="left:1px;top:3px;letter-spacing:-0.25px">0026</div></div>
<div class="a" style="left:720px;top:328px;width:85px;height:16px;overflow:hidden"><div class="t" style="left:1px;top:3px;letter-spacing:-0.25px">A11.00018</div></div>
<div class="a" style="left:806px;top:328px;width:157px;height:16px;overflow:hidden"><div class="t" style="left:1px;top:3px;letter-spacing:-0.25px">Duplicato per deterioramento</div></div>
<div class="a" style="left:964px;top:328px;width:80px;height:16px;overflow:hidden"><div class="t" style="left:1px;top:3px;letter-spacing:-0.25px">NUOVEPATE...</div></div>
<div class="a" style="left:1045px;top:328px;width:37px;height:16px;overflow:hidden"><div class="t" style="left:1px;top:3px;letter-spacing:-0.25px">DUPLICATO</div></div>
<div class="a" style="left:211px;top:344px;width:871px;height:16px;background:#E2DEFC"></div>
<div class="a" style="left:147px;top:344px;width:65px;height:16px;background:#5A8AF8;border-top:1px solid #FFF;border-left:1px solid #FFF;border-bottom:1px solid #000;border-right:1px solid #000;box-shadow:inset -1px -1px 0 #A8A494"></div>
<div class="t" style="left:147px;width:64px;text-align:center;top:347px;font-size:10px">4</div>
<div class="a" style="left:612px;top:344px;width:107px;height:16px;overflow:hidden"><div class="t" style="left:1px;top:3px;letter-spacing:-0.25px">0026</div></div>
<div class="a" style="left:720px;top:344px;width:85px;height:16px;overflow:hidden"><div class="t" style="left:1px;top:3px;letter-spacing:-0.25px">A11.00012</div></div>
<div class="a" style="left:806px;top:344px;width:157px;height:16px;overflow:hidden"><div class="t" style="left:1px;top:3px;letter-spacing:-0.25px">Duplicato per deterioramento</div></div>
<div class="a" style="left:964px;top:344px;width:80px;height:16px;overflow:hidden"><div class="t" style="left:1px;top:3px;letter-spacing:-0.25px">COCCHI</div></div>
<div class="a" style="left:1045px;top:344px;width:37px;height:16px;overflow:hidden"><div class="t" style="left:1px;top:3px;letter-spacing:-0.25px">ELENA</div></div>
<div class="a" style="left:211px;top:360px;width:871px;height:16px;background:#F9F8FF"></div>
<div class="a" style="left:147px;top:360px;width:65px;height:16px;background:#5A8AF8;border-top:1px solid #FFF;border-left:1px solid #FFF;border-bottom:1px solid #000;border-right:1px solid #000;box-shadow:inset -1px -1px 0 #A8A494"></div>
<div class="t" style="left:147px;width:64px;text-align:center;top:363px;font-size:10px">23</div>
<div class="a" style="left:612px;top:360px;width:107px;height:16px;overflow:hidden"><div class="t" style="left:1px;top:3px;letter-spacing:-0.25px">0027</div></div>
<div class="a" style="left:720px;top:360px;width:85px;height:16px;overflow:hidden"><div class="t" style="left:1px;top:3px;letter-spacing:-0.25px">R11.00002</div></div>
<div class="a" style="left:806px;top:360px;width:157px;height:16px;overflow:hidden"><div class="t" style="left:1px;top:3px;letter-spacing:-0.25px">Conferma validita' patente</div></div>
<div class="a" style="left:964px;top:360px;width:80px;height:16px;overflow:hidden"><div class="t" style="left:1px;top:3px;letter-spacing:-0.25px">RUBINI</div></div>
<div class="a" style="left:1045px;top:360px;width:37px;height:16px;overflow:hidden"><div class="t" style="left:1px;top:3px;letter-spacing:-0.25px">DANIELE</div></div>
<div class="a" style="left:211px;top:376px;width:871px;height:16px;background:#E2DEFC"></div>
<div class="a" style="left:147px;top:376px;width:65px;height:16px;background:#5A8AF8;border-top:1px solid #FFF;border-left:1px solid #FFF;border-bottom:1px solid #000;border-right:1px solid #000;box-shadow:inset -1px -1px 0 #A8A494"></div>
<div class="t" style="left:147px;width:64px;text-align:center;top:379px;font-size:10px">24</div>
<div class="a" style="left:612px;top:376px;width:107px;height:16px;overflow:hidden"><div class="t" style="left:1px;top:3px;letter-spacing:-0.25px">0027</div></div>
<div class="a" style="left:720px;top:376px;width:85px;height:16px;overflow:hidden"><div class="t" style="left:1px;top:3px;letter-spacing:-0.25px">R11.00003</div></div>
<div class="a" style="left:806px;top:376px;width:157px;height:16px;overflow:hidden"><div class="t" style="left:1px;top:3px;letter-spacing:-0.25px">Conferma validita' patente</div></div>
<div class="a" style="left:964px;top:376px;width:80px;height:16px;overflow:hidden"><div class="t" style="left:1px;top:3px;letter-spacing:-0.25px">NUOVEPATE...</div></div>
<div class="a" style="left:1045px;top:376px;width:37px;height:16px;overflow:hidden"><div class="t" style="left:1px;top:3px;letter-spacing:-0.25px">CASO3</div></div>
<div class="a" style="left:211px;top:392px;width:871px;height:16px;background:#F9F8FF"></div>
<div class="a" style="left:147px;top:392px;width:65px;height:16px;background:#5A8AF8;border-top:1px solid #FFF;border-left:1px solid #FFF;border-bottom:1px solid #000;border-right:1px solid #000;box-shadow:inset -1px -1px 0 #A8A494"></div>
<div class="t" style="left:147px;width:64px;text-align:center;top:395px;font-size:10px">26</div>
<div class="a" style="left:612px;top:392px;width:107px;height:16px;overflow:hidden"><div class="t" style="left:1px;top:3px;letter-spacing:-0.25px">0026</div></div>
<div class="a" style="left:720px;top:392px;width:85px;height:16px;overflow:hidden"><div class="t" style="left:1px;top:3px;letter-spacing:-0.25px">A11.00019</div></div>
<div class="a" style="left:806px;top:392px;width:157px;height:16px;overflow:hidden"><div class="t" style="left:1px;top:3px;letter-spacing:-0.25px">Revisione patente</div></div>
<div class="a" style="left:964px;top:392px;width:80px;height:16px;overflow:hidden"><div class="t" style="left:1px;top:3px;letter-spacing:-0.25px">FONTANA</div></div>
<div class="a" style="left:1045px;top:392px;width:37px;height:16px;overflow:hidden"><div class="t" style="left:1px;top:3px;letter-spacing:-0.25px">MATTIA</div></div>
<div class="a" style="left:211px;top:408px;width:871px;height:16px;background:#E2DEFC"></div>
<div class="a" style="left:147px;top:408px;width:65px;height:16px;background:#5A8AF8;border-top:1px solid #FFF;border-left:1px solid #FFF;border-bottom:1px solid #000;border-right:1px solid #000;box-shadow:inset -1px -1px 0 #A8A494"></div>
<div class="t" style="left:147px;width:64px;text-align:center;top:411px;font-size:10px">2</div>
<div class="a" style="left:612px;top:408px;width:107px;height:16px;overflow:hidden"><div class="t" style="left:1px;top:3px;letter-spacing:-0.25px">0001</div></div>
<div class="a" style="left:720px;top:408px;width:85px;height:16px;overflow:hidden"><div class="t" style="left:1px;top:3px;letter-spacing:-0.25px">C11.00001</div></div>
<div class="a" style="left:806px;top:408px;width:157px;height:16px;overflow:hidden"><div class="t" style="left:1px;top:3px;letter-spacing:-0.25px">CIGC: rilascio per esame</div></div>
<div class="a" style="left:964px;top:408px;width:80px;height:16px;overflow:hidden"><div class="t" style="left:1px;top:3px;letter-spacing:-0.25px">LAZZARI</div></div>
<div class="a" style="left:1045px;top:408px;width:37px;height:16px;overflow:hidden"><div class="t" style="left:1px;top:3px;letter-spacing:-0.25px">ILARIO</div></div>
<div class="a" style="left:211px;top:424px;width:871px;height:16px;background:#F9F8FF"></div>
<div class="a" style="left:147px;top:424px;width:65px;height:16px;background:#5A8AF8;border-top:1px solid #FFF;border-left:1px solid #FFF;border-bottom:1px solid #000;border-right:1px solid #000;box-shadow:inset -1px -1px 0 #A8A494"></div>
<div class="t" style="left:147px;width:64px;text-align:center;top:427px;font-size:10px">13</div>
<div class="a" style="left:612px;top:424px;width:107px;height:16px;overflow:hidden"><div class="t" style="left:1px;top:3px;letter-spacing:-0.25px">0001</div></div>
<div class="a" style="left:720px;top:424px;width:85px;height:16px;overflow:hidden"><div class="t" style="left:1px;top:3px;letter-spacing:-0.25px">C11.00001</div></div>
<div class="a" style="left:806px;top:424px;width:157px;height:16px;overflow:hidden"><div class="t" style="left:1px;top:3px;letter-spacing:-0.25px">CIGC: rilascio per esame</div></div>
<div class="a" style="left:964px;top:424px;width:80px;height:16px;overflow:hidden"><div class="t" style="left:1px;top:3px;letter-spacing:-0.25px">BOSCHI</div></div>
<div class="a" style="left:1045px;top:424px;width:37px;height:16px;overflow:hidden"><div class="t" style="left:1px;top:3px;letter-spacing:-0.25px">FEDERICO</div></div>
<div class="a" style="left:211px;top:440px;width:871px;height:16px;background:#E2DEFC"></div>
<div class="a" style="left:147px;top:440px;width:65px;height:16px;background:#5A8AF8;border-top:1px solid #FFF;border-left:1px solid #FFF;border-bottom:1px solid #000;border-right:1px solid #000;box-shadow:inset -1px -1px 0 #A8A494"></div>
<div class="t" style="left:147px;width:64px;text-align:center;top:443px;font-size:10px">22</div>
<div class="a" style="left:212px;top:440px;width:79px;height:16px;overflow:hidden"><div class="t" style="left:1px;top:3px;letter-spacing:-0.25px">No</div></div>
<div class="a" style="left:292px;top:440px;width:223px;height:16px;overflow:hidden"><div class="t" style="left:1px;top:3px;letter-spacing:-0.25px">1. Autosoft Multimedia - ROMA (VA)</div></div>
<div class="a" style="left:612px;top:440px;width:107px;height:16px;overflow:hidden"><div class="t" style="left:1px;top:3px;letter-spacing:-0.25px">0001</div></div>
<div class="a" style="left:720px;top:440px;width:85px;height:16px;overflow:hidden"><div class="t" style="left:1px;top:3px;letter-spacing:-0.25px">A11.00001</div></div>
<div class="a" style="left:806px;top:440px;width:157px;height:16px;overflow:hidden"><div class="t" style="left:1px;top:3px;letter-spacing:-0.25px">CQC: rilascio per esame</div></div>
<div class="a" style="left:964px;top:440px;width:80px;height:16px;overflow:hidden"><div class="t" style="left:1px;top:3px;letter-spacing:-0.25px">MAZZETTI</div></div>
<div class="a" style="left:1045px;top:440px;width:37px;height:16px;overflow:hidden"><div class="t" style="left:1px;top:3px;letter-spacing:-0.25px">ELENA</div></div>
<div class="a" style="left:211px;top:456px;width:871px;height:16px;background:#F9F8FF"></div>
<div class="a" style="left:147px;top:456px;width:65px;height:16px;background:#5A8AF8;border-top:1px solid #FFF;border-left:1px solid #FFF;border-bottom:1px solid #000;border-right:1px solid #000;box-shadow:inset -1px -1px 0 #A8A494"></div>
<div class="t" style="left:147px;width:64px;text-align:center;top:459px;font-size:10px">7</div>
<div class="a" style="left:212px;top:456px;width:79px;height:16px;overflow:hidden"><div class="t" style="left:1px;top:3px;letter-spacing:-0.25px">No</div></div>
<div class="a" style="left:292px;top:456px;width:223px;height:16px;overflow:hidden"><div class="t" style="left:1px;top:3px;letter-spacing:-0.25px">1. Autosoft Multimedia - ROMA (VA)</div></div>
<div class="a" style="left:612px;top:456px;width:107px;height:16px;overflow:hidden"><div class="t" style="left:1px;top:3px;letter-spacing:-0.25px">0001</div></div>
<div class="a" style="left:720px;top:456px;width:85px;height:16px;overflow:hidden"><div class="t" style="left:1px;top:3px;letter-spacing:-0.25px">A11.00004</div></div>
<div class="a" style="left:806px;top:456px;width:157px;height:16px;overflow:hidden"><div class="t" style="left:1px;top:3px;letter-spacing:-0.25px">CQC: rilascio per esame</div></div>
<div class="a" style="left:964px;top:456px;width:80px;height:16px;overflow:hidden"><div class="t" style="left:1px;top:3px;letter-spacing:-0.25px">CAVAZZA</div></div>
<div class="a" style="left:1045px;top:456px;width:37px;height:16px;overflow:hidden"><div class="t" style="left:1px;top:3px;letter-spacing:-0.25px">TOMMASO</div></div>
<div class="a" style="left:211px;top:472px;width:871px;height:16px;background:#E2DEFC"></div>
<div class="a" style="left:147px;top:472px;width:65px;height:16px;background:#5A8AF8;border-top:1px solid #FFF;border-left:1px solid #FFF;border-bottom:1px solid #000;border-right:1px solid #000;box-shadow:inset -1px -1px 0 #A8A494"></div>
<div class="t" style="left:147px;width:64px;text-align:center;top:475px;font-size:10px">27</div>
<div class="a" style="left:212px;top:472px;width:79px;height:16px;overflow:hidden"><div class="t" style="left:1px;top:3px;letter-spacing:-0.25px">No</div></div>
<div class="a" style="left:292px;top:472px;width:223px;height:16px;overflow:hidden"><div class="t" style="left:1px;top:3px;letter-spacing:-0.25px">1. Autosoft Multimedia - ROMA (VA)</div></div>
<div class="a" style="left:612px;top:472px;width:107px;height:16px;overflow:hidden"><div class="t" style="left:1px;top:3px;letter-spacing:-0.25px">0001</div></div>
<div class="a" style="left:720px;top:472px;width:85px;height:16px;overflow:hidden"><div class="t" style="left:1px;top:3px;letter-spacing:-0.25px">R11.00004</div></div>
<div class="a" style="left:806px;top:472px;width:157px;height:16px;overflow:hidden"><div class="t" style="left:1px;top:3px;letter-spacing:-0.25px">CQC: duplicato deterioramento</div></div>
<div class="a" style="left:964px;top:472px;width:80px;height:16px;overflow:hidden"><div class="t" style="left:1px;top:3px;letter-spacing:-0.25px">MAZZONI</div></div>
<div class="a" style="left:1045px;top:472px;width:37px;height:16px;overflow:hidden"><div class="t" style="left:1px;top:3px;letter-spacing:-0.25px">GIORGIO</div></div>
<div class="a" style="left:211px;top:488px;width:871px;height:16px;background:#F9F8FF"></div>
<div class="a" style="left:147px;top:488px;width:65px;height:16px;background:#5A8AF8;border-top:1px solid #FFF;border-left:1px solid #FFF;border-bottom:1px solid #000;border-right:1px solid #000;box-shadow:inset -1px -1px 0 #A8A494"></div>
<div class="t" style="left:147px;width:64px;text-align:center;top:491px;font-size:10px">11</div>
<div class="a" style="left:212px;top:488px;width:79px;height:16px;overflow:hidden"><div class="t" style="left:1px;top:3px;letter-spacing:-0.25px">No</div></div>
<div class="a" style="left:292px;top:488px;width:223px;height:16px;overflow:hidden"><div class="t" style="left:1px;top:3px;letter-spacing:-0.25px">1. Autosoft Multimedia - ROMA (VA)</div></div>
<div class="a" style="left:806px;top:488px;width:157px;height:16px;overflow:hidden"><div class="t" style="left:1px;top:3px;letter-spacing:-0.25px">APC,CIG,AB: solo accesso quiz</div></div>
<div class="a" style="left:964px;top:488px;width:80px;height:16px;overflow:hidden"><div class="t" style="left:1px;top:3px;letter-spacing:-0.25px">GIULIANI</div></div>
<div class="a" style="left:1045px;top:488px;width:37px;height:16px;overflow:hidden"><div class="t" style="left:1px;top:3px;letter-spacing:-0.25px">LARISSA</div></div>
<div class="a" style="left:211px;top:504px;width:871px;height:16px;background:#E2DEFC"></div>
<div class="a" style="left:147px;top:504px;width:65px;height:16px;background:#5A8AF8;border-top:1px solid #FFF;border-left:1px solid #FFF;border-bottom:1px solid #000;border-right:1px solid #000;box-shadow:inset -1px -1px 0 #A8A494"></div>
<div class="t" style="left:147px;width:64px;text-align:center;top:507px;font-size:10px">5</div>
<div class="a" style="left:212px;top:504px;width:79px;height:16px;overflow:hidden"><div class="t" style="left:1px;top:3px;letter-spacing:-0.25px">No</div></div>
<div class="a" style="left:292px;top:504px;width:223px;height:16px;overflow:hidden"><div class="t" style="left:1px;top:3px;letter-spacing:-0.25px">1. Autosoft Multimedia - ROMA (VA)</div></div>
<div class="a" style="left:806px;top:504px;width:157px;height:16px;overflow:hidden"><div class="t" style="left:1px;top:3px;letter-spacing:-0.25px">APC,CIG,AB: solo accesso quiz</div></div>
<div class="a" style="left:964px;top:504px;width:80px;height:16px;overflow:hidden"><div class="t" style="left:1px;top:3px;letter-spacing:-0.25px">COCCHI</div></div>
<div class="a" style="left:1045px;top:504px;width:37px;height:16px;overflow:hidden"><div class="t" style="left:1px;top:3px;letter-spacing:-0.25px">ELENA</div></div>
<div class="a" style="left:211px;top:520px;width:871px;height:16px;background:#F9F8FF"></div>
<div class="a" style="left:147px;top:520px;width:65px;height:16px;background:#5A8AF8;border-top:1px solid #FFF;border-left:1px solid #FFF;border-bottom:1px solid #000;border-right:1px solid #000;box-shadow:inset -1px -1px 0 #A8A494"></div>
<div class="t" style="left:147px;width:64px;text-align:center;top:523px;font-size:10px">18</div>
<div class="a" style="left:212px;top:520px;width:79px;height:16px;overflow:hidden"><div class="t" style="left:1px;top:3px;letter-spacing:-0.25px">No</div></div>
<div class="a" style="left:292px;top:520px;width:223px;height:16px;overflow:hidden"><div class="t" style="left:1px;top:3px;letter-spacing:-0.25px">1. Autosoft Multimedia - ROMA (VA)</div></div>
<div class="a" style="left:806px;top:520px;width:157px;height:16px;overflow:hidden"><div class="t" style="left:1px;top:3px;letter-spacing:-0.25px">APC,CIG,AB: solo accesso quiz</div></div>
<div class="a" style="left:964px;top:520px;width:80px;height:16px;overflow:hidden"><div class="t" style="left:1px;top:3px;letter-spacing:-0.25px">MORELLI</div></div>
<div class="a" style="left:1045px;top:520px;width:37px;height:16px;overflow:hidden"><div class="t" style="left:1px;top:3px;letter-spacing:-0.25px">ELENA</div></div>
<div class="a" style="left:211px;top:536px;width:871px;height:16px;background:#E2DEFC"></div>
<div class="a" style="left:147px;top:536px;width:65px;height:16px;background:#5A8AF8;border-top:1px solid #FFF;border-left:1px solid #FFF;border-bottom:1px solid #000;border-right:1px solid #000;box-shadow:inset -1px -1px 0 #A8A494"></div>
<div class="t" style="left:147px;width:64px;text-align:center;top:539px;font-size:10px">6</div>
<div class="a" style="left:212px;top:536px;width:79px;height:16px;overflow:hidden"><div class="t" style="left:1px;top:3px;letter-spacing:-0.25px">No</div></div>
<div class="a" style="left:292px;top:536px;width:223px;height:16px;overflow:hidden"><div class="t" style="left:1px;top:3px;letter-spacing:-0.25px">1. Autosoft Multimedia - ROMA (VA)</div></div>
<div class="a" style="left:806px;top:536px;width:157px;height:16px;overflow:hidden"><div class="t" style="left:1px;top:3px;letter-spacing:-0.25px">APC,CIG,AB: solo accesso quiz</div></div>
<div class="a" style="left:964px;top:536px;width:80px;height:16px;overflow:hidden"><div class="t" style="left:1px;top:3px;letter-spacing:-0.25px">GHERARDI</div></div>
<div class="a" style="left:1045px;top:536px;width:37px;height:16px;overflow:hidden"><div class="t" style="left:1px;top:3px;letter-spacing:-0.25px">MATTIA</div></div>
<div class="a" style="left:211px;top:552px;width:871px;height:16px;background:#F9F8FF"></div>
<div class="a" style="left:147px;top:552px;width:65px;height:16px;background:#5A8AF8;border-top:1px solid #FFF;border-left:1px solid #FFF;border-bottom:1px solid #000;border-right:1px solid #000;box-shadow:inset -1px -1px 0 #A8A494"></div>
<div class="t" style="left:147px;width:64px;text-align:center;top:555px;font-size:10px">8</div>
<div class="a" style="left:212px;top:552px;width:79px;height:16px;overflow:hidden"><div class="t" style="left:1px;top:3px;letter-spacing:-0.25px">No</div></div>
<div class="a" style="left:292px;top:552px;width:223px;height:16px;overflow:hidden"><div class="t" style="left:1px;top:3px;letter-spacing:-0.25px">1. Autosoft Multimedia - ROMA (VA)</div></div>
<div class="a" style="left:806px;top:552px;width:157px;height:16px;overflow:hidden"><div class="t" style="left:1px;top:3px;letter-spacing:-0.25px">APC,CIG,AB: solo accesso quiz</div></div>
<div class="a" style="left:964px;top:552px;width:80px;height:16px;overflow:hidden"><div class="t" style="left:1px;top:3px;letter-spacing:-0.25px">TUGNOLI</div></div>
<div class="a" style="left:1045px;top:552px;width:37px;height:16px;overflow:hidden"><div class="t" style="left:1px;top:3px;letter-spacing:-0.25px">DANIELE</div></div>
<div class="a" style="left:211px;top:568px;width:871px;height:16px;background:#E2DEFC"></div>
<div class="a" style="left:147px;top:568px;width:65px;height:16px;background:#5A8AF8;border-top:1px solid #FFF;border-left:1px solid #FFF;border-bottom:1px solid #000;border-right:1px solid #000;box-shadow:inset -1px -1px 0 #A8A494"></div>
<div class="t" style="left:147px;width:64px;text-align:center;top:571px;font-size:10px">16</div>
<div class="a" style="left:212px;top:568px;width:79px;height:16px;overflow:hidden"><div class="t" style="left:1px;top:3px;letter-spacing:-0.25px">No</div></div>
<div class="a" style="left:292px;top:568px;width:223px;height:16px;overflow:hidden"><div class="t" style="left:1px;top:3px;letter-spacing:-0.25px">1. Autosoft Multimedia - ROMA (VA)</div></div>
<div class="a" style="left:806px;top:568px;width:157px;height:16px;overflow:hidden"><div class="t" style="left:1px;top:3px;letter-spacing:-0.25px">APC,CIG,AB: solo accesso quiz</div></div>
<div class="a" style="left:964px;top:568px;width:80px;height:16px;overflow:hidden"><div class="t" style="left:1px;top:3px;letter-spacing:-0.25px">ZAMBONI</div></div>
<div class="a" style="left:1045px;top:568px;width:37px;height:16px;overflow:hidden"><div class="t" style="left:1px;top:3px;letter-spacing:-0.25px">PATRIZIA</div></div>
<div class="a" style="left:211px;top:584px;width:871px;height:16px;background:#F9F8FF"></div>
<div class="a" style="left:147px;top:584px;width:65px;height:16px;background:#5A8AF8;border-top:1px solid #FFF;border-left:1px solid #FFF;border-bottom:1px solid #000;border-right:1px solid #000;box-shadow:inset -1px -1px 0 #A8A494"></div>
<div class="t" style="left:147px;width:64px;text-align:center;top:587px;font-size:10px">12</div>
<div class="a" style="left:212px;top:584px;width:79px;height:16px;overflow:hidden"><div class="t" style="left:1px;top:3px;letter-spacing:-0.25px">No</div></div>
<div class="a" style="left:292px;top:584px;width:223px;height:16px;overflow:hidden"><div class="t" style="left:1px;top:3px;letter-spacing:-0.25px">1. Autosoft Multimedia - ROMA (VA)</div></div>
<div class="a" style="left:806px;top:584px;width:157px;height:16px;overflow:hidden"><div class="t" style="left:1px;top:3px;letter-spacing:-0.25px">APC,CIG,AB: solo accesso quiz</div></div>
<div class="a" style="left:964px;top:584px;width:80px;height:16px;overflow:hidden"><div class="t" style="left:1px;top:3px;letter-spacing:-0.25px">MACCAFERRI</div></div>
<div class="a" style="left:1045px;top:584px;width:37px;height:16px;overflow:hidden"><div class="t" style="left:1px;top:3px;letter-spacing:-0.25px">PAOLA</div></div>
<div class="a" style="left:211px;top:600px;width:871px;height:16px;background:#E2DEFC"></div>
<div class="a" style="left:147px;top:600px;width:65px;height:16px;background:#5A8AF8;border-top:1px solid #FFF;border-left:1px solid #FFF;border-bottom:1px solid #000;border-right:1px solid #000;box-shadow:inset -1px -1px 0 #A8A494"></div>
<div class="t" style="left:147px;width:64px;text-align:center;top:603px;font-size:10px">15</div>
<div class="a" style="left:212px;top:600px;width:79px;height:16px;overflow:hidden"><div class="t" style="left:1px;top:3px;letter-spacing:-0.25px">No</div></div>
<div class="a" style="left:292px;top:600px;width:223px;height:16px;overflow:hidden"><div class="t" style="left:1px;top:3px;letter-spacing:-0.25px">1. Autosoft Multimedia - ROMA (VA)</div></div>
<div class="a" style="left:806px;top:600px;width:157px;height:16px;overflow:hidden"><div class="t" style="left:1px;top:3px;letter-spacing:-0.25px">APC,CIG,AB: solo accesso quiz</div></div>
<div class="a" style="left:964px;top:600px;width:80px;height:16px;overflow:hidden"><div class="t" style="left:1px;top:3px;letter-spacing:-0.25px">BASSI</div></div>
<div class="a" style="left:1045px;top:600px;width:37px;height:16px;overflow:hidden"><div class="t" style="left:1px;top:3px;letter-spacing:-0.25px">PATRIZIA</div></div>
<div class="a" style="left:211px;top:616px;width:871px;height:16px;background:#F9F8FF"></div>
<div class="a" style="left:147px;top:616px;width:65px;height:16px;background:#5A8AF8;border-top:1px solid #FFF;border-left:1px solid #FFF;border-bottom:1px solid #000;border-right:1px solid #000;box-shadow:inset -1px -1px 0 #A8A494"></div>
<div class="t" style="left:147px;width:64px;text-align:center;top:619px;font-size:10px">19</div>
<div class="a" style="left:212px;top:616px;width:79px;height:16px;overflow:hidden"><div class="t" style="left:1px;top:3px;letter-spacing:-0.25px">No</div></div>
<div class="a" style="left:292px;top:616px;width:223px;height:16px;overflow:hidden"><div class="t" style="left:1px;top:3px;letter-spacing:-0.25px">1. Autosoft Multimedia - ROMA (VA)</div></div>
<div class="a" style="left:612px;top:616px;width:107px;height:16px;overflow:hidden"><div class="t" style="left:1px;top:3px;letter-spacing:-0.25px">0026</div></div>
<div class="a" style="left:720px;top:616px;width:85px;height:16px;overflow:hidden"><div class="t" style="left:1px;top:3px;letter-spacing:-0.25px">A11.00016</div></div>
<div class="a" style="left:806px;top:616px;width:157px;height:16px;overflow:hidden"><div class="t" style="left:1px;top:3px;letter-spacing:-0.25px">GA: rilascio</div></div>
<div class="a" style="left:964px;top:616px;width:80px;height:16px;overflow:hidden"><div class="t" style="left:1px;top:3px;letter-spacing:-0.25px">ZANASI</div></div>
<div class="a" style="left:1045px;top:616px;width:37px;height:16px;overflow:hidden"><div class="t" style="left:1px;top:3px;letter-spacing:-0.25px">LUCA</div></div>
<div class="a" style="left:291px;top:167px;width:1px;height:465px;background:#000"></div>
<div class="a" style="left:515px;top:167px;width:1px;height:465px;background:#000"></div>
<div class="a" style="left:611px;top:167px;width:1px;height:465px;background:#000"></div>
<div class="a" style="left:719px;top:167px;width:1px;height:465px;background:#000"></div>
<div class="a" style="left:805px;top:167px;width:1px;height:465px;background:#000"></div>
<div class="a" style="left:963px;top:167px;width:1px;height:465px;background:#000"></div>
<div class="a" style="left:1044px;top:167px;width:1px;height:465px;background:#000"></div>
<div class="a" style="left:516px;top:360px;width:96px;height:16px;background:#F9F8FF"></div>
<div class="a" style="left:516px;top:360px;width:95px;height:15px;background:#C0C0C0"></div>
<div class="a" style="left:516px;top:376px;width:96px;height:16px;background:#E2DEFC"></div>
<div class="a" style="left:516px;top:376px;width:95px;height:15px;background:#C0C0C0"></div>
<div class="a" style="left:516px;top:392px;width:96px;height:16px;background:#F9F8FF"></div>
<div class="a" style="left:516px;top:392px;width:95px;height:15px;background:#C0C0C0"></div>
<div class="a" style="left:516px;top:408px;width:96px;height:16px;background:#E2DEFC"></div>
<div class="a" style="left:516px;top:408px;width:95px;height:15px;background:#C0C0C0"></div>
<div class="a" style="left:516px;top:424px;width:96px;height:16px;background:#F9F8FF"></div>
<div class="a" style="left:516px;top:424px;width:95px;height:15px;background:#C0C0C0"></div>
<div class="a" style="left:516px;top:440px;width:96px;height:16px;background:#E2DEFC"></div>
<div class="a" style="left:516px;top:440px;width:95px;height:15px;background:#C0C0C0"></div>
<div class="a" style="left:516px;top:456px;width:96px;height:16px;background:#F9F8FF"></div>
<div class="a" style="left:516px;top:456px;width:95px;height:15px;background:#C0C0C0"></div>
<div class="a" style="left:516px;top:472px;width:96px;height:16px;background:#E2DEFC"></div>
<div class="a" style="left:516px;top:472px;width:95px;height:15px;background:#C0C0C0"></div>
<div class="a" style="left:516px;top:488px;width:96px;height:16px;background:#F9F8FF"></div>
<div class="a" style="left:516px;top:488px;width:95px;height:15px;background:#C0C0C0"></div>
<div class="a" style="left:720px;top:488px;width:86px;height:16px;background:#F9F8FF"></div>
<div class="a" style="left:720px;top:488px;width:85px;height:15px;background:#C0C0C0"></div>
<div class="a" style="left:516px;top:504px;width:96px;height:16px;background:#E2DEFC"></div>
<div class="a" style="left:516px;top:504px;width:95px;height:15px;background:#C0C0C0"></div>
<div class="a" style="left:720px;top:504px;width:86px;height:16px;background:#E2DEFC"></div>
<div class="a" style="left:720px;top:504px;width:85px;height:15px;background:#C0C0C0"></div>
<div class="a" style="left:516px;top:520px;width:96px;height:16px;background:#F9F8FF"></div>
<div class="a" style="left:516px;top:520px;width:95px;height:15px;background:#C0C0C0"></div>
<div class="a" style="left:720px;top:520px;width:86px;height:16px;background:#F9F8FF"></div>
<div class="a" style="left:720px;top:520px;width:85px;height:15px;background:#C0C0C0"></div>
<div class="a" style="left:516px;top:536px;width:96px;height:16px;background:#E2DEFC"></div>
<div class="a" style="left:516px;top:536px;width:95px;height:15px;background:#C0C0C0"></div>
<div class="a" style="left:720px;top:536px;width:86px;height:16px;background:#E2DEFC"></div>
<div class="a" style="left:720px;top:536px;width:85px;height:15px;background:#C0C0C0"></div>
<div class="a" style="left:516px;top:552px;width:96px;height:16px;background:#F9F8FF"></div>
<div class="a" style="left:516px;top:552px;width:95px;height:15px;background:#C0C0C0"></div>
<div class="a" style="left:720px;top:552px;width:86px;height:16px;background:#F9F8FF"></div>
<div class="a" style="left:720px;top:552px;width:85px;height:15px;background:#C0C0C0"></div>
<div class="a" style="left:516px;top:568px;width:96px;height:16px;background:#E2DEFC"></div>
<div class="a" style="left:516px;top:568px;width:95px;height:15px;background:#C0C0C0"></div>
<div class="a" style="left:720px;top:568px;width:86px;height:16px;background:#E2DEFC"></div>
<div class="a" style="left:720px;top:568px;width:85px;height:15px;background:#C0C0C0"></div>
<div class="a" style="left:516px;top:584px;width:96px;height:16px;background:#F9F8FF"></div>
<div class="a" style="left:516px;top:584px;width:95px;height:15px;background:#C0C0C0"></div>
<div class="a" style="left:720px;top:584px;width:86px;height:16px;background:#F9F8FF"></div>
<div class="a" style="left:720px;top:584px;width:85px;height:15px;background:#C0C0C0"></div>
<div class="a" style="left:516px;top:600px;width:96px;height:16px;background:#E2DEFC"></div>
<div class="a" style="left:516px;top:600px;width:95px;height:15px;background:#C0C0C0"></div>
<div class="a" style="left:720px;top:600px;width:86px;height:16px;background:#E2DEFC"></div>
<div class="a" style="left:720px;top:600px;width:85px;height:15px;background:#C0C0C0"></div>
<div class="a" style="left:516px;top:616px;width:96px;height:16px;background:#F9F8FF"></div>
<div class="a" style="left:516px;top:616px;width:95px;height:15px;background:#C0C0C0"></div>
<div class="a" style="left:147px;top:770px;width:935px;height:17px;background:linear-gradient(#F3F1EC,#FEFEFA)"></div>
<div class="a" style="left:148px;top:771px;width:15px;height:15px;background:linear-gradient(135deg,#D8E4FC,#B8CCF6);border:1px solid #B0C4EC;border-radius:2px"><svg class="a" style="left:-1px;top:-1px" width="15" height="15"><path d="M9 4 L5 8 L9 12" fill="none" stroke="#4D6185" stroke-width="2"/></svg></div>
<div class="a" style="left:1066px;top:771px;width:15px;height:15px;background:linear-gradient(135deg,#D8E4FC,#B8CCF6);border:1px solid #B0C4EC;border-radius:2px"><svg class="a" style="left:-1px;top:-1px" width="15" height="15"><path d="M6 4 L10 8 L6 12" fill="none" stroke="#4D6185" stroke-width="2"/></svg></div>
<div class="a" style="left:164px;top:771px;width:17px;height:15px;background:linear-gradient(135deg,#D8E4FC,#BCD0F8);border:1px solid #B0C4EC;border-radius:2px"><svg class="a" style="left:4px;top:3px" width="8" height="8"><path d="M0.5 0V8M2.5 0V8M4.5 0V8M6.5 0V8" stroke="#8CA8E0" stroke-width="1"/></svg></div>
<div class="a" style="left:215px;top:51px;width:276px;height:392px;background:rgba(0,0,0,.25);filter:blur(2px)"></div>
<div class="a" style="left:212px;top:48px;width:276px;height:392px;background:#FFFFFF;border:1px solid #ACA899"></div>
<div class="t" style="left:231px;top:55px">Gestione delle autorizzazioni (utenti e password)</div>
<div class="a" style="left:216px;top:72px;width:268px;height:1px;background:#ACA899"></div>
<div class="t" style="left:231px;top:81px">Dati autoscuola e sedi</div>
<div class="t" style="left:231px;top:98px">Dati dei medici</div>
<div class="t" style="left:231px;top:115px">Stampe, stampanti e modulistica</div>
<div class="a" style="left:216px;top:132px;width:268px;height:1px;background:#ACA899"></div>
<div class="t" style="left:231px;top:141px">Registri: sigle e numerazioni</div>
<div class="t" style="left:231px;top:158px">Caratteristiche delle pratiche</div>
<div class="a" style="left:216px;top:175px;width:268px;height:1px;background:#ACA899"></div>
<div class="t" style="left:231px;top:184px">Caratteristiche delle sedute d'esame</div>
<div class="t" style="left:231px;top:201px">Durata di validità delle patenti</div>
<div class="t" style="left:231px;top:218px">Tempi critici per pratiche foglio rosa</div>
<div class="t" style="left:231px;top:235px">Classificazione patenti per pratiche</div>
<div class="a" style="left:216px;top:252px;width:268px;height:1px;background:#ACA899"></div>
<div class="t" style="left:231px;top:261px">Tabella percentuali IVA</div>
<div class="t" style="left:231px;top:278px">Generatore pratiche</div>
<div class="t" style="left:231px;top:295px">Listino prezzi completo</div>
<div class="a" style="left:216px;top:312px;width:268px;height:1px;background:#ACA899"></div>
<div class="t" style="left:231px;top:321px">Località italiane</div>
<div class="t" style="left:231px;top:338px">Stati esteri</div>
<div class="a" style="left:216px;top:355px;width:268px;height:1px;background:#ACA899"></div>
<div class="t" style="left:231px;top:364px">SMS</div>
<div class="t" style="left:231px;top:381px">Connessione a Internet</div>
<div class="a" style="left:216px;top:398px;width:268px;height:1px;background:#ACA899"></div>
<div class="t" style="left:231px;top:407px">Etichette codice a barre</div>
<div class="a" style="left:215px;top:420px;width:267px;height:17px;background:#316AC5"></div>
<div class="t" style="left:231px;top:424px;color:#fff">Formati foto/firme</div>
<svg class="a" style="left:472px;top:424px" width="8" height="9"><path d="M1 0.5 L5 4.5 L1 8.5Z" fill="#fff"/></svg>
<div class="a" style="left:485px;top:421px;width:208px;height:74px;background:rgba(0,0,0,.25);filter:blur(2px)"></div>
<div class="a" style="left:482px;top:418px;width:208px;height:74px;background:#FFFFFF;border:1px solid #ACA899"></div>
<div class="t" style="left:501px;top:424px">Formato foto per Prenota Patente</div>
<div class="t" style="left:501px;top:441px">Formato firma Patente DTT</div>
<div class="t" style="left:501px;top:458px">Formato foto per Prenota CQC</div>
<div class="t" style="left:501px;top:475px">Formato foto per Fastwork</div>
</body></html>
